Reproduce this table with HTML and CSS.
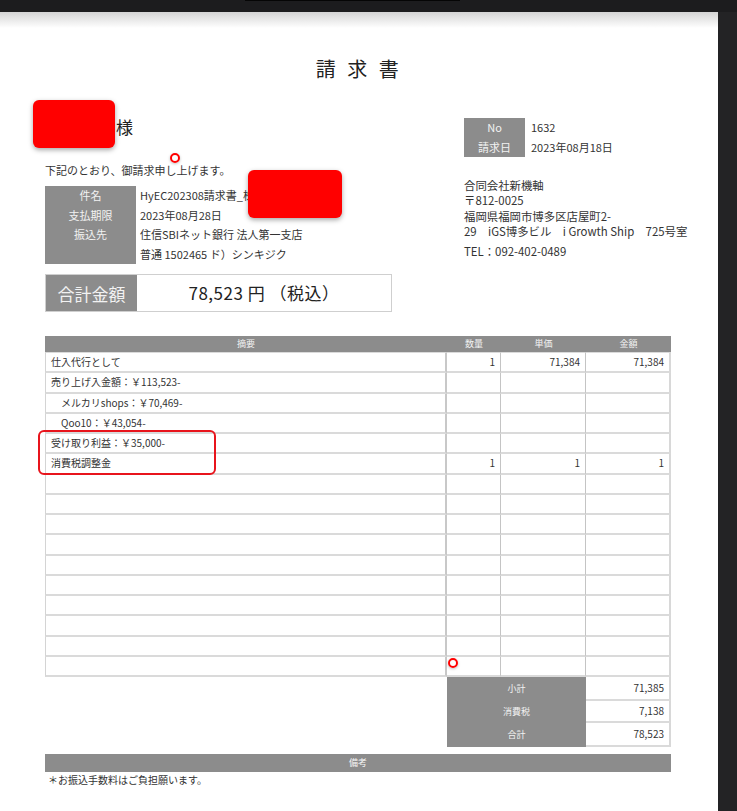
FILE: index.html
```html
<!DOCTYPE html>
<html lang="ja">
<head>
  <meta charset="UTF-8">
  <meta name="viewport" content="width=device-width, initial-scale=1.0">
  <title>請求書</title>
  <link rel="stylesheet" href="styles.css">
</head>
<body>

  <div class="topbar"><span class="topbar-line"></span></div>

  <div class="viewer">
    <main class="sheet">
      <h1 class="title">請 求 書</h1>

      <section class="head">
        <div class="head-left">
          <p class="client"><span class="client-name">〇〇〇〇</span>様</p>
          <p class="lead">下記のとおり、御請求申し上げます。</p>

          <dl class="info">
            <dt>件名</dt><dd>HyEC202308請求書_株式会社〇〇〇〇</dd>
            <dt>支払期限</dt><dd>2023年08月28日</dd>
            <dt>振込先</dt><dd>住信SBIネット銀行 法人第一支店</dd>
            <dt></dt><dd>普通 1502465 ド）シンキジク</dd>
          </dl>

          <div class="total">
            <span class="total-label">合計金額</span>
            <span class="total-value">78,523 円 （税込）</span>
          </div>
        </div>

        <div class="head-right">
          <dl class="meta">
            <dt>No</dt><dd>1632</dd>
            <dt>請求日</dt><dd>2023年08月18日</dd>
          </dl>
          <address class="company">
            合同会社新機軸<br>
            〒812-0025<br>
            福岡県福岡市博多区店屋町2-<br>
            29　iGS博多ビル　i Growth Ship　725号室
            <span class="tel">TEL：092-402-0489</span>
          </address>
        </div>
      </section>

      <table class="items">
        <colgroup>
          <col class="col-desc">
          <col class="col-qty">
          <col class="col-price">
          <col class="col-amount">
        </colgroup>
        <thead>
          <tr><th>摘要</th><th>数量</th><th>単価</th><th>金額</th></tr>
        </thead>
        <tbody>
          <tr><td>仕入代行として</td><td class="num">1</td><td class="num">71,384</td><td class="num">71,384</td></tr>
          <tr><td>売り上げ入金額：￥113,523-</td><td></td><td></td><td></td></tr>
          <tr><td>　メルカリshops：￥70,469-</td><td></td><td></td><td></td></tr>
          <tr><td>　Qoo10：￥43,054-</td><td></td><td></td><td></td></tr>
          <tr><td>受け取り利益：￥35,000-</td><td></td><td></td><td></td></tr>
          <tr><td>消費税調整金</td><td class="num">1</td><td class="num">1</td><td class="num">1</td></tr>
          <tr><td></td><td></td><td></td><td></td></tr>
          <tr><td></td><td></td><td></td><td></td></tr>
          <tr><td></td><td></td><td></td><td></td></tr>
          <tr><td></td><td></td><td></td><td></td></tr>
          <tr><td></td><td></td><td></td><td></td></tr>
          <tr><td></td><td></td><td></td><td></td></tr>
          <tr><td></td><td></td><td></td><td></td></tr>
          <tr><td></td><td></td><td></td><td></td></tr>
          <tr><td></td><td></td><td></td><td></td></tr>
          <tr><td></td><td></td><td></td><td></td></tr>
        </tbody>
        <tfoot>
          <tr><td class="blank"></td><th colspan="2">小計</th><td class="num">71,385</td></tr>
          <tr class="mid"><td class="blank"></td><th colspan="2">消費税</th><td class="num">7,138</td></tr>
          <tr><td class="blank"></td><th colspan="2">合計</th><td class="num">78,523</td></tr>
        </tfoot>
      </table>

      <div class="remarks">備考</div>
      <p class="note">＊お振込手数料はご負担願います。</p>

      <!-- redactions and markers drawn over the scan -->
      <span class="redact redact-name"></span>
      <span class="redact redact-subject"></span>
      <span class="mark mark-lead"></span>
      <span class="mark mark-table"></span>
      <span class="callout"></span>
    </main>
    <div class="side"></div>
  </div>

</body>
</html>
```

FILE: styles.css
```css
body {
  margin: 0;
  background-color: #1c1c1e;
  font-family: "Noto Sans CJK JP", sans-serif;
  color: #333;
}
.topbar {
  height: 12px;
  background-color: #1c1c1e;
}
.topbar-line {
  display: block;
  margin-left: 245px;
  width: 215px;
  height: 1px;
  background-color: #050505;
}
.viewer {
  display: flex;
  height: 799px;
}
.sheet {
  position: relative;
  width: 718px;
  padding-top: 45px;
  box-sizing: border-box;
  background: linear-gradient(to bottom, #d4d4d4 0, #ffffff 16px);
}
.side {
  flex: 1;
  background-color: #232325;
}
.title {
  margin: 0;
  text-align: center;
  font-size: 20px;
  line-height: 24px;
  font-weight: 400;
  letter-spacing: 3.5px;
  color: #222;
}
.head {
  display: grid;
  grid-template-columns: 419px 1fr;
  margin: 36px 0 0 45px;
}
.client {
  margin: 0;
  font-size: 17px;
  line-height: 20px;
  color: #222;
}
.client-name {
  display: inline-block;
  width: 71px;
}
.lead {
  margin: 25px 0 0;
  font-size: 11px;
  line-height: 16px;
}
.info,
.meta {
  display: grid;
  grid-auto-rows: 19.5px;
  margin: 0;
  font-size: 11px;
  line-height: 19.5px;
}
.info {
  grid-template-columns: 91px 1fr;
  margin-top: 8px;
}
.meta {
  grid-template-columns: 61px 1fr;
  margin-top: 1px;
}
.info dt,
.meta dt {
  background-color: #8c8c8c;
  color: #f2f2f2;
  text-align: center;
}
.info dd {
  margin: 0;
  padding-left: 4px;
  white-space: nowrap;
}
.meta dd {
  margin: 0;
  padding-left: 6px;
}
.total {
  display: flex;
  width: 347px;
  height: 38px;
  margin-top: 10px;
  border: 1px solid #cfcfcf;
  box-sizing: border-box;
}
.total-label {
  display: flex;
  align-items: center;
  justify-content: center;
  width: 91px;
  background-color: #8c8c8c;
  color: #f2f2f2;
  font-size: 17px;
}
.total-value {
  flex: 1;
  text-align: center;
  font-size: 17px;
  line-height: 36px;
  letter-spacing: 0.5px;
  color: #222;
}
.company {
  margin-top: 21px;
  font-style: normal;
  font-size: 11.4px;
  line-height: 15.4px;
  white-space: nowrap;
}
.tel {
  display: block;
  margin-top: 4px;
}
.items {
  width: 626px;
  margin: 24px 0 0 45px;
  border-collapse: separate;
  border-spacing: 0;
  table-layout: fixed;
  font-size: 10px;
}
.col-desc { width: 402px; }
.col-qty { width: 54px; }
.col-price { width: 85px; }
.col-amount { width: 85px; }
.items thead th {
  height: 16px;
  padding: 0;
  background-color: #8c8c8c;
  color: #f4f4f4;
  font-size: 9px;
  font-weight: 400;
  line-height: 16px;
}
.items tbody td {
  height: 18.25px;
  padding: 0 5px;
  border-bottom: 2px solid #dadada;
  border-right: 1px solid #c4c4c4;
  line-height: 18px;
  white-space: nowrap;
}
.items tbody td:first-child {
  border-left: 1px solid #d4d4d4;
  border-right: 2px solid #c8c8c8;
  padding-left: 5px;
}
.items tbody td:last-child,
.items tfoot td:last-child {
  border-right: 2px solid #d8d8d8;
}
.items tbody tr:first-child td {
  border-top: 1px solid #dadada;
}
.items .num {
  text-align: right;
}
.items tfoot td,
.items tfoot th {
  height: 22px;
  padding: 0 5px;
  line-height: 22px;
}
.items tfoot th {
  background-color: #8c8c8c;
  color: #f2f2f2;
  font-size: 9px;
  font-weight: 400;
}
.items tfoot td {
  border-bottom: 2px solid #dadada;
}
.items tfoot .blank {
  border: none;
}
.items tfoot tr.mid td,
.items tfoot tr.mid th {
  height: 20px;
  line-height: 20px;
}
.remarks {
  width: 626px;
  height: 18px;
  margin: 7px 0 0 45px;
  background-color: #8c8c8c;
  color: #f4f4f4;
  font-size: 9px;
  line-height: 18px;
  text-align: center;
}
.note {
  margin: 0 0 0 48px;
  font-size: 10px;
  line-height: 15px;
}
.redact {
  position: absolute;
  background-color: #ff0000;
  border-radius: 6px;
  box-shadow: 0 2px 5px rgba(0, 0, 0, 0.35);
}
.redact-name {
  left: 33px;
  top: 88px;
  width: 82px;
  height: 48px;
}
.redact-subject {
  left: 248px;
  top: 158px;
  width: 94px;
  height: 48px;
}
.mark {
  position: absolute;
  width: 6px;
  height: 6px;
  border: 2px solid #ff0000;
  border-radius: 50%;
  box-shadow: 0 1px 3px rgba(0, 0, 0, 0.25);
}
.mark-lead {
  left: 170px;
  top: 141px;
}
.mark-table {
  left: 448px;
  top: 646px;
}
.callout {
  position: absolute;
  left: 38px;
  top: 418px;
  width: 178px;
  height: 45px;
  border: 2px solid #e8141c;
  border-radius: 6px;
  box-sizing: border-box;
}
```
